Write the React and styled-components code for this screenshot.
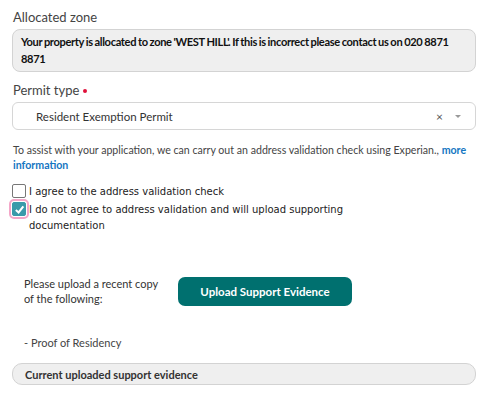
import React from "react";
import styled, { createGlobalStyle } from "styled-components";

const GlobalStyle = createGlobalStyle`
  body {
    margin: 0;
    background: #fff;
    font-family: Lato, "Open Sans", sans-serif;
    color: #333;
  }
`;

const Page = styled.div`
  width: 464px;
  padding: 9px 19px 0 12px;
`;

const FieldLabel = styled.div`
  font-size: 13px;
  color: #444;
  margin: 0 0 4px 1px;
  display: flex;
  align-items: center;
  gap: 4px;
`;

const Required = styled.span`
  width: 4px;
  height: 4px;
  border-radius: 50%;
  background: #e0103a;
  margin-top: 2px;
`;

const InfoBox = styled.div`
  background: #efefef;
  border: 1px solid #d3d3d3;
  border-radius: 8px;
  padding: 3px 8px 4px;
  font-size: 11.1px;
  letter-spacing: -0.35px;
  word-spacing: -0.5px;
  font-weight: 700;
  line-height: 17px;
  color: #111;
  margin-bottom: 10px;
`;

const Select = styled.div`
  height: 26px;
  border: 1px solid #d6d6d6;
  border-radius: 6px;
  display: flex;
  align-items: center;
  padding: 0 14px 0 23px;
  font-size: 11.5px;
  color: #333;
  margin-bottom: 13px;
`;

const SelectValue = styled.span`
  flex: 1;
`;

const Clear = styled.span`
  font-size: 12px;
  color: #555;
  margin-right: 12px;
`;

const Caret = styled.span`
  width: 0;
  height: 0;
  border-left: 3px solid transparent;
  border-right: 3px solid transparent;
  border-top: 3px solid #999;
`;

const Help = styled.p`
  margin: 0 0 11px 1px;
  font-size: 10.6px;
  line-height: 15px;
  color: #444;
`;

const MoreLink = styled.a`
  color: #1576c2;
  font-weight: 700;
  text-decoration: none;
`;

const CheckRow = styled.label`
  display: flex;
  align-items: flex-start;
  gap: 3px;
  font-family: "DejaVu Sans", Verdana, sans-serif;
  font-size: 10px;
  line-height: 16px;
  color: #222;
  margin-bottom: 2px;
`;

const Box = styled.span`
  flex: none;
  width: 14px;
  height: 14px;
  box-sizing: border-box;
  border: 1px solid ${(p) => (p.checked ? "#3a9aaa" : "#777")};
  background: ${(p) => (p.checked ? "#3a9aaa" : "#fff")};
  border-radius: 2px;
  display: flex;
  align-items: center;
  justify-content: center;
  outline: ${(p) => (p.checked ? "2px solid #f4a6c8" : "none")};
  outline-offset: 1px;
`;

const Upload = styled.div`
  display: flex;
  align-items: center;
  gap: 14px;
  padding: 0 0 0 12px;
  margin-top: 42px;
`;

const UploadText = styled.div`
  width: 140px;
  font-size: 11px;
  line-height: 15px;
  color: #333;
`;

const UploadButton = styled.button`
  width: 174px;
  height: 29px;
  border: none;
  border-radius: 7px;
  background: #00706f;
  color: #fff;
  font-family: inherit;
  font-size: 11.5px;
  font-weight: 700;
`;

const Proof = styled.div`
  font-size: 11px;
  color: #444;
  padding-left: 12px;
  margin: 30px 0 14px;
`;

const EvidenceBar = styled.div`
  height: 20px;
  border: 1px solid #d3d3d3;
  border-radius: 10px;
  background: #efefef;
  padding-left: 12px;
  display: flex;
  align-items: center;
  font-size: 11px;
  font-weight: 700;
  color: #333;
`;

export default function App() {
  return (
    <>
      <GlobalStyle />
      <Page>
        <FieldLabel>Allocated zone</FieldLabel>
        <InfoBox>
          Your property is allocated to zone 'WEST HILL'. If this is incorrect
          please contact us on 020 8871 8871
        </InfoBox>
        <FieldLabel>
          Permit type <Required />
        </FieldLabel>
        <Select>
          <SelectValue>Resident Exemption Permit</SelectValue>
          <Clear>×</Clear>
          <Caret />
        </Select>
        <Help>
          To assist with your application, we can carry out an address
          validation check using Experian.,{" "}
          <MoreLink href="#">more information</MoreLink>
        </Help>
        <CheckRow>
          <Box />
          I agree to the address validation check
        </CheckRow>
        <CheckRow>
          <Box checked>
            <svg width="11" height="11" viewBox="0 0 12 12">
              <path d="M2 6.5 L5 9.2 L10.2 2.6" fill="none" stroke="#fff" strokeWidth="2.2" />
            </svg>
          </Box>
          <span>
            I do not agree to address validation and will upload supporting
            <br />
            documentation
          </span>
        </CheckRow>
        <Upload>
          <UploadText>
            Please upload a recent copy
            <br />
            of the following:
          </UploadText>
          <UploadButton>Upload Support Evidence</UploadButton>
        </Upload>
        <Proof>- Proof of Residency</Proof>
        <EvidenceBar>Current uploaded support evidence</EvidenceBar>
      </Page>
    </>
  );
}
